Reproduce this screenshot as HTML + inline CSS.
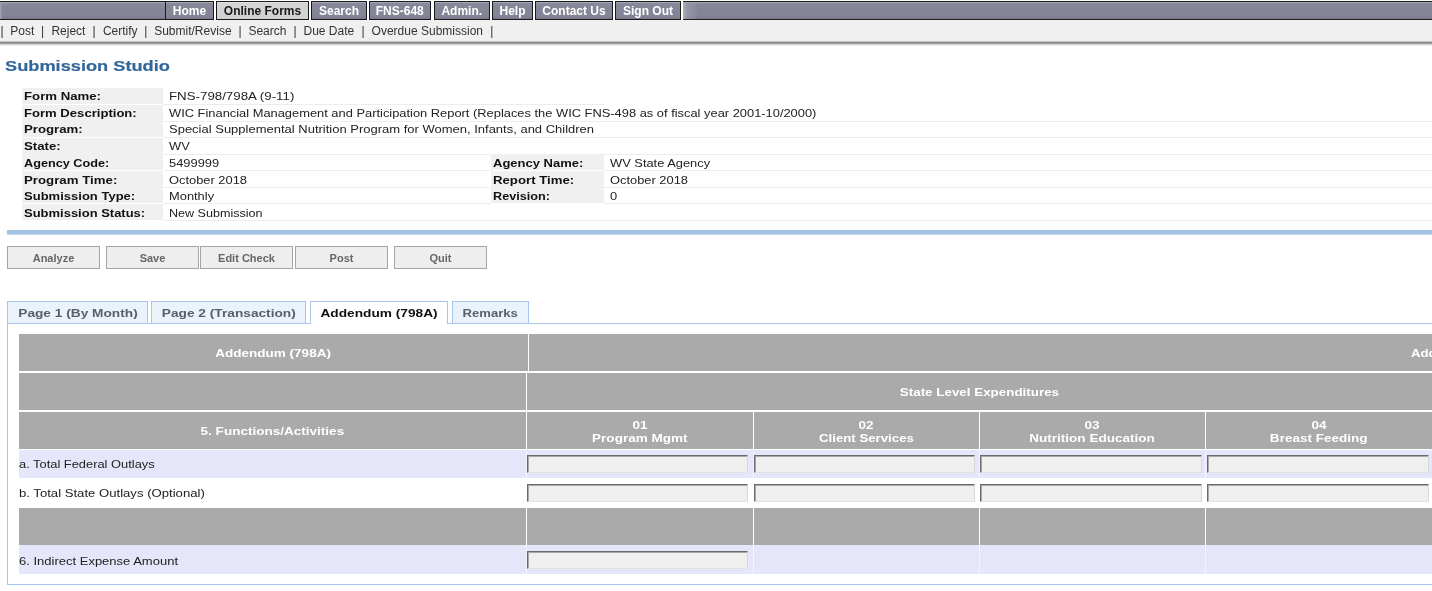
<!DOCTYPE html>
<html><head><meta charset="utf-8">
<style>
*{box-sizing:border-box}
html,body{will-change:transform;margin:0;padding:0;background:#fff;width:1432px;height:591px;overflow:hidden;position:relative;font-family:"Liberation Sans",sans-serif}
.a{position:absolute}
i{font-style:normal;display:inline-block;white-space:nowrap}
.sr{transform:scaleX(1.17);transform-origin:0 50%}
.sb{transform:scaleX(1.2);transform-origin:0 50%}
.sc{transform:scaleX(1.23);transform-origin:50% 50%}
#navleft{position:absolute;left:0;top:1px;width:165px;height:19px;background:linear-gradient(to right,#9e9fad 0,#9e9fad 1px,rgba(133,134,152,0) 2px),linear-gradient(#a7a8b6 0,#a7a8b6 1px,#8a8b9c 1px,#858698 4px,#838496 14px,#77788a 100%);border-top:1px solid #1a1a1a;border-bottom:1px solid #1e1e1e}
#navright{position:absolute;left:683px;top:1px;width:749px;height:19px;background:linear-gradient(to right,rgba(178,178,192,.9) 0,rgba(160,161,175,.6) 4px,rgba(133,134,152,0) 16px),linear-gradient(#a7a8b6 0,#a7a8b6 1px,#8a8b9c 1px,#858698 4px,#838496 14px,#77788a 100%);border-top:1px solid #1a1a1a;border-bottom:1px solid #1e1e1e}
.nb{position:absolute;top:1px;height:19px;border:1px solid #1a1a1a;background:linear-gradient(#a7a8b6 0,#a7a8b6 1px,#8a8b9c 1px,#858698 4px,#838496 14px,#77788a 100%);color:#fff;font:bold 12px/18px "Liberation Sans",sans-serif;text-align:center;white-space:nowrap}
.nb.on{background:linear-gradient(#e4e4e4 0,#e4e4e4 1px,#d4d4d4 1px,#d2d2d2 100%);color:#1a1a1a}
#subnav{position:absolute;left:0;top:20px;width:1432px;height:21px;background:#f0f0f0;font:12px/22px "Liberation Sans",sans-serif;color:#333;white-space:pre}
#subnav span{position:absolute;top:0}
#shadow{position:absolute;left:0;top:41px;width:1432px;height:5px;background:linear-gradient(#c4c4c4 0,#c4c4c4 1px,#8a8a8a 1px,#8a8a8a 2px,#a0a0a0 2px,#a0a0a0 3px,#d2d2d2 3px,#d2d2d2 4px,#f2f2f2 4px)}
#title{position:absolute;left:5px;top:56px;font:bold 15.5px/20px "Liberation Sans",sans-serif;color:#336699;white-space:nowrap;-webkit-text-stroke:0.2px #336699}
#title i{transform:scaleX(1.175);transform-origin:0 50%}
.lab{position:absolute;background:#f0f0f0;font:bold 11px/16px "Liberation Sans",sans-serif;color:#111;padding-left:2px;white-space:nowrap}
.val{position:absolute;border-bottom:1px solid #ededed;font:11px/16px "Liberation Sans",sans-serif;color:#222;padding-left:6px;white-space:nowrap}
#rule{position:absolute;left:7px;top:230px;width:1425px;height:5px;background:linear-gradient(#a3c3e5 0,#a3c3e5 4px,#c5daee 4px)}
.btn{position:absolute;top:246px;height:23px;width:93px;background:#eeeeee;border:1px solid #a5a5a5;color:#666;font:bold 11px/22px "Liberation Sans",sans-serif;text-align:center}
.tab{position:absolute;top:301px;height:22px;padding-top:1px;background:#eaf2fc;border:1px solid #a9c5ee;border-bottom:none;color:#5b6068;font:bold 11px/21px "Liberation Sans",sans-serif;text-align:center;white-space:nowrap}
.tab.act{background:#fff;color:#111;height:23px;z-index:2;top:301px}
.tab i{transform:scaleX(1.245)}
#panel{position:absolute;left:7px;top:323px;width:1440px;height:262px;border:1px solid #a9c5ee}
.hd{position:absolute;background:#aaaaaa;color:#fff;font:bold 11px/13px "Liberation Sans",sans-serif;text-align:center;white-space:nowrap}
.row{position:absolute;font:11px/16px "Liberation Sans",sans-serif;color:#222;white-space:nowrap}
.inp{position:absolute;height:18px;background:#efefef;border-style:solid;border-width:1px;border-color:#6a6a6a #d8d8d8 #e2e2e2 #6a6a6a;box-shadow:inset 1px 1px 0 #a9a9a9}
</style></head><body>
<div id="navleft"></div><div id="navright"></div>
<div class="nb " style="left:165px;width:49px">Home</div><div class="nb on" style="left:216px;width:93px">Online Forms</div><div class="nb " style="left:311px;width:56px">Search</div><div class="nb " style="left:368.5px;width:62.5px">FNS-648</div><div class="nb " style="left:433.5px;width:56.5px">Admin.</div><div class="nb " style="left:492px;width:41px">Help</div><div class="nb " style="left:535px;width:78px">Contact Us</div><div class="nb " style="left:615px;width:66px">Sign Out</div>
<div id="subnav"><span style="left:0.6px">|</span><span style="left:10.3px">Post</span><span style="left:41.1px">|</span><span style="left:51.4px">Reject</span><span style="left:92.6px">|</span><span style="left:102.9px">Certify</span><span style="left:144.3px">|</span><span style="left:154.2px">Submit/Revise</span><span style="left:238.6px">|</span><span style="left:248.4px">Search</span><span style="left:293.6px">|</span><span style="left:303.5px">Due Date</span><span style="left:361.6px">|</span><span style="left:371.6px">Overdue Submission</span><span style="left:490.2px">|</span></div><div id="shadow"></div>
<div id="title"><i>Submission Studio</i></div>
<div class="lab" style="left:22px;top:88.0px;width:141px;height:16px;"><i class="sb">Form Name:</i></div>
<div class="val" style="left:163px;top:88.0px;width:441px;height:17px;"><i class="sr" style="transform:scaleX(1.208)">FNS-798/798A (9-11)</i></div>
<div class="lab" style="left:22px;top:104.5px;width:141px;height:16px;"><i class="sb" style="transform:scaleX(1.19)">Form Description:</i></div>
<div class="val" style="left:163px;top:104.5px;width:1269px;height:17px;"><i class="sr">WIC Financial Management and Participation Report (Replaces the WIC FNS-498 as of fiscal year 2001-10/2000)</i></div>
<div class="lab" style="left:22px;top:121.0px;width:141px;height:16px;"><i class="sb">Program:</i></div>
<div class="val" style="left:163px;top:121.0px;width:1269px;height:17px;"><i class="sr" style="transform:scaleX(1.181)">Special Supplemental Nutrition Program for Women, Infants, and Children</i></div>
<div class="lab" style="left:22px;top:137.5px;width:141px;height:16px;"><i class="sb">State:</i></div>
<div class="val" style="left:163px;top:137.5px;width:1269px;height:17px;"><i class="sr">WV</i></div>
<div class="lab" style="left:22px;top:154.0px;width:141px;height:16px;padding-top:1px"><i class="sb" style="transform:scaleX(1.153)">Agency Code:</i></div>
<div class="val" style="left:163px;top:154.0px;width:328px;height:17px;padding-top:1px"><i class="sr">5499999</i></div>
<div class="lab" style="left:491px;top:154.0px;width:113px;height:16px;padding-top:1px"><i class="sb" style="transform:scaleX(1.182)">Agency Name:</i></div>
<div class="val" style="left:604px;top:154.0px;width:828px;height:17px;padding-top:1px"><i class="sr">WV State Agency</i></div>
<div class="lab" style="left:22px;top:170.5px;width:141px;height:16px;padding-top:1px"><i class="sb" style="transform:scaleX(1.205)">Program Time:</i></div>
<div class="val" style="left:163px;top:170.5px;width:328px;height:17px;padding-top:1px"><i class="sr">October 2018</i></div>
<div class="lab" style="left:491px;top:170.5px;width:113px;height:16px;padding-top:1px"><i class="sb">Report Time:</i></div>
<div class="val" style="left:604px;top:170.5px;width:828px;height:17px;padding-top:1px"><i class="sr">October 2018</i></div>
<div class="lab" style="left:22px;top:187.0px;width:141px;height:16px;padding-top:1px"><i class="sb" style="transform:scaleX(1.184)">Submission Type:</i></div>
<div class="val" style="left:163px;top:187.0px;width:328px;height:17px;padding-top:1px"><i class="sr">Monthly</i></div>
<div class="lab" style="left:491px;top:187.0px;width:113px;height:16px;padding-top:1px"><i class="sb" style="transform:scaleX(1.152)">Revision:</i></div>
<div class="val" style="left:604px;top:187.0px;width:828px;height:17px;padding-top:1px"><i class="sr">0</i></div>
<div class="lab" style="left:22px;top:203.5px;width:141px;height:16px;padding-top:1px;"><i class="sb" style="transform:scaleX(1.18)">Submission Status:</i></div>
<div class="val" style="left:163px;top:203.5px;width:1269px;height:17px;padding-top:1px;"><i class="sr" style="transform:scaleX(1.142)">New Submission</i></div>
<div id="rule"></div>
<div class="btn" style="left:7px">Analyze</div>
<div class="btn" style="left:106px">Save</div>
<div class="btn" style="left:200px">Edit Check</div>
<div class="btn" style="left:295px">Post</div>
<div class="btn" style="left:394px">Quit</div>
<div id="panel"></div>
<div class="tab " style="left:7px;width:141px"><i class="sc">Page 1 (By Month)</i></div>
<div class="tab " style="left:151px;width:155px"><i class="sc">Page 2 (Transaction)</i></div>
<div class="tab act" style="left:310px;width:138px"><i class="sc">Addendum (798A)</i></div>
<div class="tab " style="left:452px;width:77px"><i class="sc" style="transform:scaleX(1.19)">Remarks</i></div>
<div class="hd" style="left:19px;top:334px;width:509px;height:37px;line-height:37px;padding-top:1px"><i class="sc">Addendum (798A)</i></div>
<div class="hd" style="left:529px;top:334px;width:903px;height:37px;line-height:37px;text-align:left;padding-left:882px;padding-top:1px"><i class="sb">Addendum (798A)</i></div>
<div class="hd" style="left:19px;top:373px;width:507px;height:37px;"></div>
<div class="hd" style="left:527px;top:373px;width:905px;height:37px;line-height:37px;padding-top:1px"><i class="sc" style="transform:scaleX(1.217)">State Level Expenditures</i></div>
<div class="hd" style="left:19px;top:412px;width:507px;height:37px;line-height:37px;padding-top:1px"><i class="sc">5. Functions/Activities</i></div>
<div class="hd" style="left:527px;top:412px;width:226px;height:37px;padding-top:7px"><i class="sc">01</i><br><i class="sc">Program Mgmt</i></div>
<div class="hd" style="left:754px;top:412px;width:225px;height:37px;padding-top:7px"><i class="sc">02</i><br><i class="sc" style="transform:scaleX(1.203)">Client Services</i></div>
<div class="hd" style="left:980px;top:412px;width:225px;height:37px;padding-top:7px"><i class="sc">03</i><br><i class="sc">Nutrition Education</i></div>
<div class="hd" style="left:1206px;top:412px;width:226px;height:37px;padding-top:7px"><i class="sc">04</i><br><i class="sc">Breast Feeding</i></div>
<div class="a" style="left:19px;top:450px;width:1413px;height:28px;background:#e6e6fa"></div>
<div class="row" style="left:19px;top:456px"><i class="sr">a. Total Federal Outlays</i></div>
<div class="row" style="left:19px;top:485px"><i class="sr" style="transform:scaleX(1.193)">b. Total State Outlays (Optional)</i></div>
<div class="inp" style="left:527px;top:455px;width:221px"></div>
<div class="inp" style="left:754px;top:455px;width:221px"></div>
<div class="inp" style="left:980px;top:455px;width:222px"></div>
<div class="inp" style="left:1207px;top:455px;width:222px"></div>
<div class="inp" style="left:527px;top:484px;width:221px"></div>
<div class="inp" style="left:754px;top:484px;width:221px"></div>
<div class="inp" style="left:980px;top:484px;width:222px"></div>
<div class="inp" style="left:1207px;top:484px;width:222px"></div>
<div class="hd" style="left:19px;top:508px;width:507px;height:37px;"></div>
<div class="hd" style="left:527px;top:508px;width:226px;height:37px;"></div>
<div class="hd" style="left:754px;top:508px;width:225px;height:37px;"></div>
<div class="hd" style="left:980px;top:508px;width:225px;height:37px;"></div>
<div class="hd" style="left:1206px;top:508px;width:226px;height:37px;"></div>
<div class="a" style="left:19px;top:545px;width:1413px;height:29px;background:#e6e6fa"></div>
<div class="a" style="left:526px;top:450px;width:1px;height:28px;background:#f4f4fd"></div>
<div class="a" style="left:526px;top:545px;width:1px;height:29px;background:#f4f4fd"></div>
<div class="a" style="left:753px;top:450px;width:1px;height:28px;background:#f4f4fd"></div>
<div class="a" style="left:753px;top:545px;width:1px;height:29px;background:#f4f4fd"></div>
<div class="a" style="left:979px;top:450px;width:1px;height:28px;background:#f4f4fd"></div>
<div class="a" style="left:979px;top:545px;width:1px;height:29px;background:#f4f4fd"></div>
<div class="a" style="left:1205px;top:450px;width:1px;height:28px;background:#f4f4fd"></div>
<div class="a" style="left:1205px;top:545px;width:1px;height:29px;background:#f4f4fd"></div>
<div class="row" style="left:19px;top:553px"><i class="sr" style="transform:scaleX(1.182)">6. Indirect Expense Amount</i></div>
<div class="inp" style="left:527px;top:551px;width:221px"></div>
</body></html>
